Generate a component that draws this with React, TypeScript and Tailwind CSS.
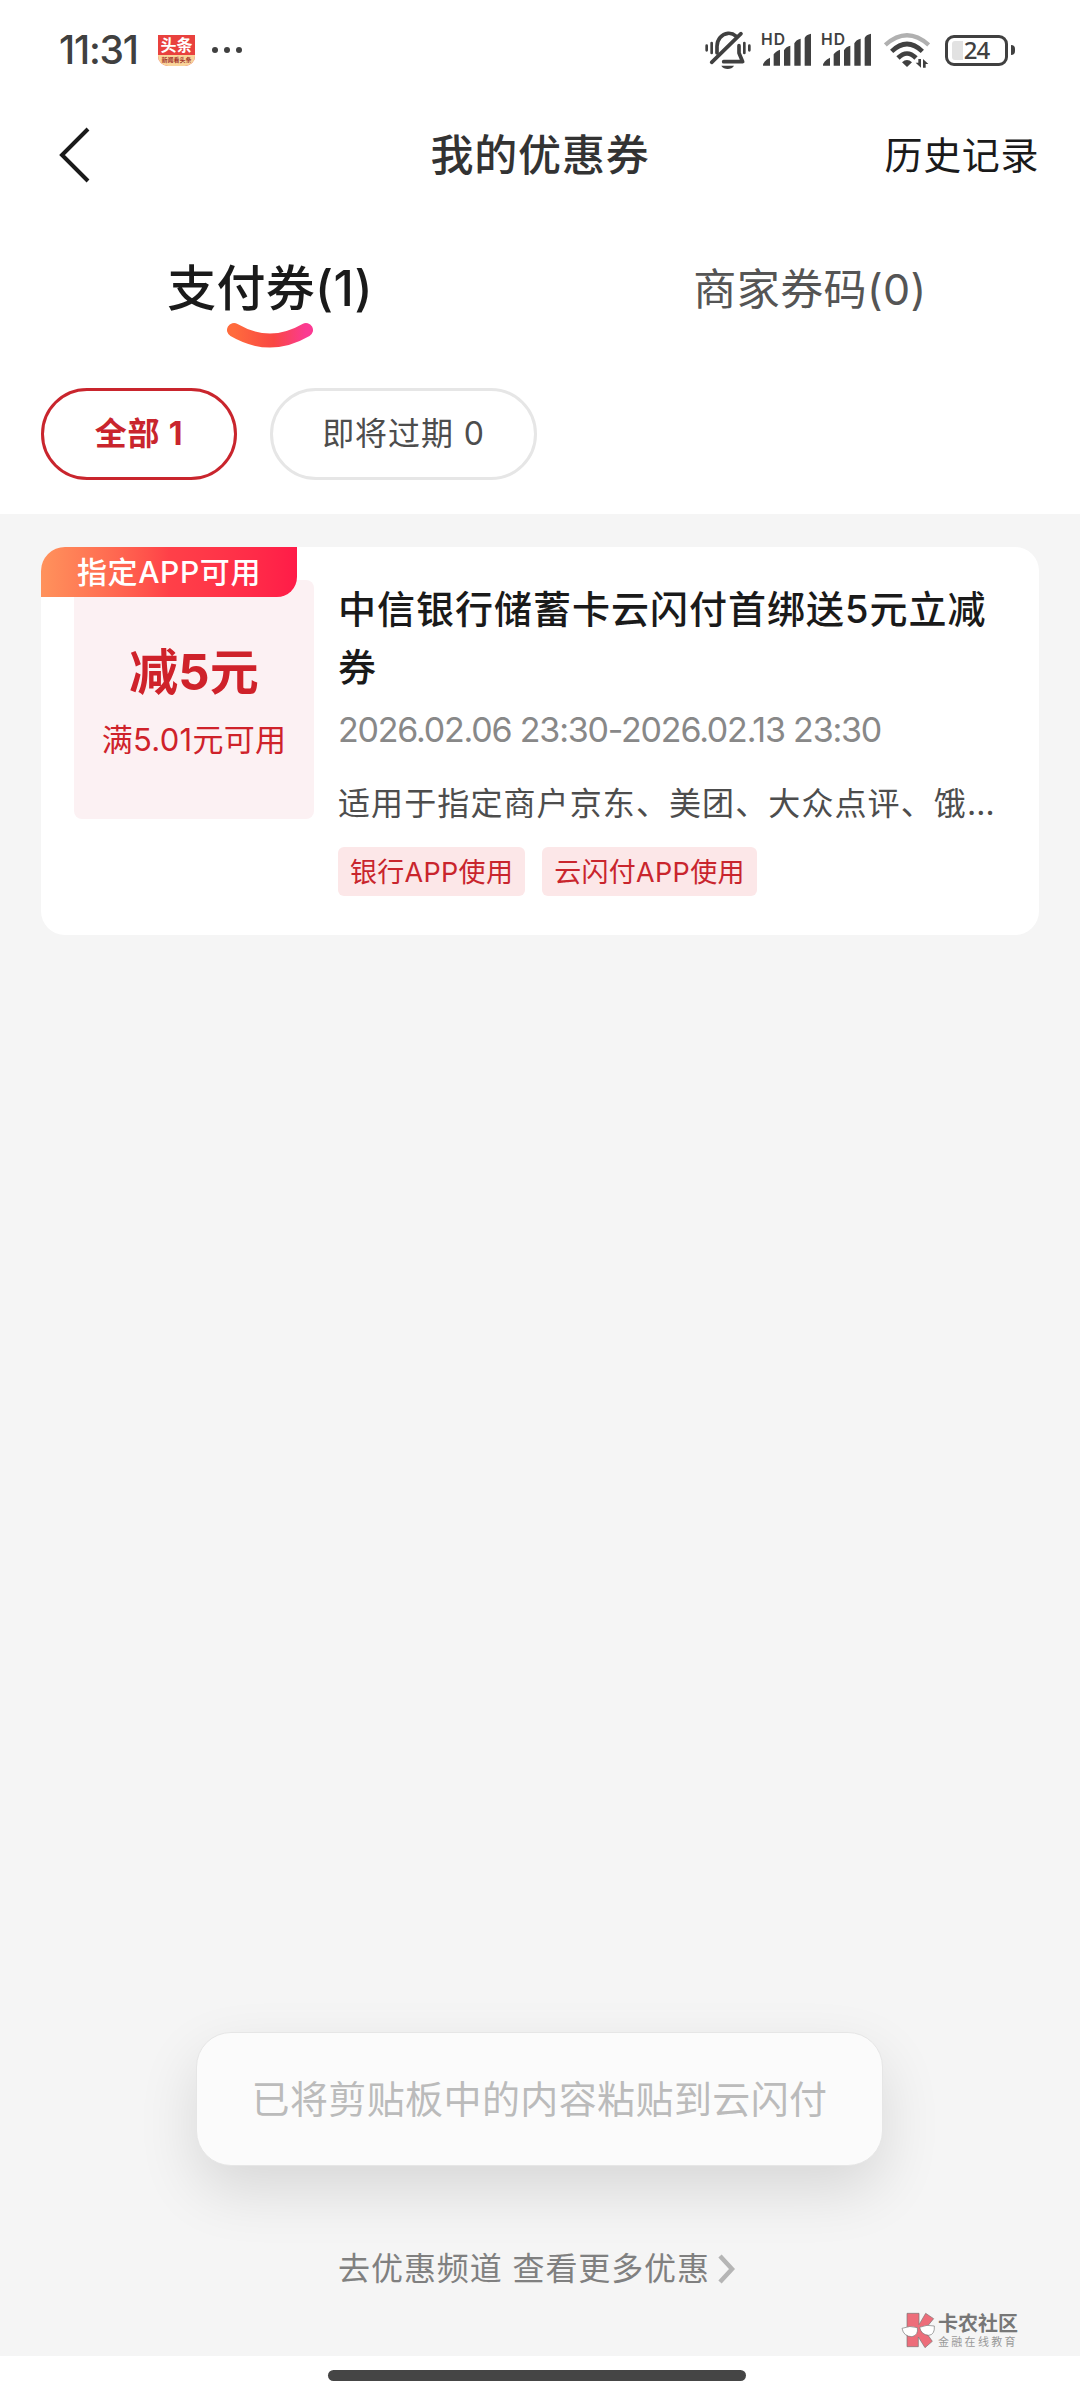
import React from 'react';

const tabs = [
  { id: 'pay', label: '支付券', count: 1 },
  { id: 'merchant', label: '商家券码', count: 0 },
];

const coupon = {
  badge: '指定APP可用',
  amount: '减5元',
  condition: '满5.01元可用',
  title: '中信银行储蓄卡云闪付首绑送5元立减券',
  period: '2026.02.06 23:30-2026.02.13 23:30',
  desc: '适用于指定商户京东、美团、大众点评、饿…',
  tags: ['银行APP使用', '云闪付APP使用'],
};

function MutedBellIcon() {
  return (
    <svg width="46" height="39" viewBox="0 0 138 117" fill="none" stroke="#404040" strokeWidth="11" strokeLinecap="round">
      <path d="M5 44v14M20 36v30M118 36v30M133 44v14" strokeWidth="8" />
      <path d="M36 66V46c0-21 14-37 33-39c10-1 18 3 25 9" />
      <path d="M102 44v22l11 26H56" strokeLinejoin="round" />
      <path d="M108 8L20 94" />
      <path d="M49 104h38c-7 13-31 13-38 0z" fill="#404040" stroke="none" />
    </svg>
  );
}

function SignalIcon() {
  return (
    <svg className="overflow-visible" width="51" height="34" viewBox="0 0 153 102" fill="#404040">
      <text x="0" y="37" fontFamily="Inter, sans-serif" fontSize="47" fontWeight="600" textLength="72">HD</text>
      <path d="M6 98q0-14 21-24v24zM38 98V64q4-8 19-14v48zM69 98V52q4-10 19-14v60zM100 98V31q4-10 19-14v81zM131 98V15q4-10 19-13v96z" />
    </svg>
  );
}

function WifiIcon() {
  return (
    <svg width="46" height="35" viewBox="0 0 138 105" fill="none" strokeWidth="13">
      <path d="M4 36Q69-22 134 36" stroke="#b0b0b0" />
      <path d="M23 55Q69 11 115 55" stroke="#404040" strokeWidth="14" />
      <path d="M42 75Q69 48 96 75" stroke="#404040" strokeWidth="14" />
      <path d="M54 88q15-14 30 0L69 102z" fill="#404040" />
      <path d="M111 78v26l-16-15h8V78zM117 104V78l16 15h-8v11z" fill="#404040" />
    </svg>
  );
}

function BatteryIcon() {
  return (
    <div className="flex items-center gap-[3px]">
      <div className="relative flex h-[31px] w-[63px] items-center justify-center rounded-[9px] border-[3px] border-[#404040]">
        <div className="absolute left-1 top-[3px] h-[19px] w-[11px] rounded-l-[3px] bg-[#e2e2e2]" />
        <span className="relative font-['Noto_Sans'] text-[24px] leading-none font-medium tracking-[-1px]">24</span>
      </div>
      <div className="h-[10px] w-1 rounded-r-full bg-[#404040]" />
    </div>
  );
}

function StatusBar() {
  return (
    <div className="flex h-[100px] items-center pl-[59px] pr-[65px] text-[#404040]">
      <span className="w-[80px] pb-px text-[39px] leading-none font-medium tracking-[-1.2px]">11:31</span>
      <div className="ml-[19px] flex h-[31px] w-[37px] flex-col overflow-hidden rounded-b-[10px] bg-[#e9413e]">
        <span className="text-center text-[16px] leading-[20px] font-bold text-white">头条</span>
        <span className="h-[11px] bg-[#f9d49a] text-center text-[6px] leading-[9px] font-bold whitespace-nowrap text-[#a3352a]">新闻看头条</span>
      </div>
      <div className="ml-[17px] flex gap-[6px]">
        <i className="size-[6px] rounded-full bg-[#404040]" />
        <i className="size-[6px] rounded-full bg-[#404040]" />
        <i className="size-[6px] rounded-full bg-[#404040]" />
      </div>
      <div className="ml-auto flex items-center">
        <MutedBellIcon />
        <div className="ml-[10px] flex gap-[9px]">
          <SignalIcon />
          <SignalIcon />
        </div>
        <div className="ml-[12px] mr-[15px]">
          <WifiIcon />
        </div>
        <BatteryIcon />
      </div>
    </div>
  );
}

function Header() {
  return (
    <div className="grid h-[110px] grid-cols-3 items-center pl-[59px] pr-[41px]">
      <svg width="32" height="56" viewBox="0 0 32 56" fill="none" stroke="#1a1a1a" strokeWidth="4">
        <path d="M29 2L3 28L29 54" />
      </svg>
      <h1 className="-ml-[18px] text-center text-[43px] leading-none font-medium tracking-[0.8px] whitespace-nowrap text-[#333]">我的优惠券</h1>
      <span className="text-right text-[38px] leading-none tracking-[0.6px] text-[#1a1a1a]">历史记录</span>
    </div>
  );
}

function Tabs() {
  return (
    <div className="grid h-[150px] grid-cols-2 pt-[49px]">
      <div className="flex flex-col items-center">
        <span className="text-[49px] leading-[60px] font-medium tracking-[0.3px] text-[#1a1a1a]">{tabs[0].label}({tabs[0].count})</span>
        <svg className="mt-[3px]" width="88" height="28" viewBox="0 0 88 28" fill="none">
          <defs>
            <linearGradient id="smile" x1="0" y1="0" x2="1" y2="0">
              <stop offset="0" stopColor="#ff6b3d" />
              <stop offset="0.55" stopColor="#f94743" />
              <stop offset="1" stopColor="#fb3a92" />
            </linearGradient>
          </defs>
          <path d="M8 8Q44 29 80 8" stroke="url(#smile)" strokeWidth="14" strokeLinecap="round" />
        </svg>
      </div>
      <span className="text-center text-[43px] leading-[60px] tracking-[0.4px] text-[#555]">{tabs[1].label}({tabs[1].count})</span>
    </div>
  );
}

function Filters() {
  return (
    <div className="flex h-[154px] gap-[33px] px-[41px] pt-[28px]">
      <button className="h-[92px] w-[196px] rounded-full border-[3px] border-[#c9252d] text-[32px] font-bold tracking-[0.8px] text-[#c9252d]">全部 1</button>
      <button className="h-[92px] w-[267px] rounded-full border-[3px] border-[#e6e6e6] text-[32px] tracking-[0.9px] text-[#4d4d4d]">即将过期 0</button>
    </div>
  );
}

function CouponCard() {
  return (
    <div className="relative flex h-[388px] rounded-[24px] bg-white pl-[33px] pt-[33px]">
      <div className="flex h-[239px] w-[240px] shrink-0 flex-col items-center rounded-[8px] bg-[#fcf1f3] pt-[63px] text-[#cf222a]">
        <span className="text-[49px] leading-[60px] font-bold">{coupon.amount}</span>
        <span className="mt-[9px] text-[31px] leading-[56px] tracking-[0.3px] whitespace-nowrap">{coupon.condition}</span>
      </div>
      <div className="ml-[24px] w-[674px]">
        <h2 className="text-[38px] leading-[58px] font-medium tracking-[1px] text-[#1a1a1a]">{coupon.title}</h2>
        <p className="mt-[11px] text-[34px] leading-[46px] tracking-[-1.2px] whitespace-nowrap text-[#888]">{coupon.period}</p>
        <p className="mt-[27px] text-[32px] leading-[48px] tracking-[1.1px] whitespace-nowrap text-[#4d4d4d]">{coupon.desc}</p>
        <div className="mt-[19px] flex gap-[17px]">
          {coupon.tags.map((tag) => (
            <span key={tag} className="flex h-[49px] items-center rounded-[6px] bg-[#fce7e8] px-[12px] pt-px text-[27px] leading-none tracking-[0.3px] whitespace-nowrap text-[#c9252d]">
              {tag}
            </span>
          ))}
        </div>
      </div>
      {/* corner ribbon over the amount box */}
      <div className="absolute left-0 top-0 flex h-[50px] w-[256px] items-center justify-center rounded-tl-[24px] rounded-br-[20px] bg-linear-to-r from-[#ff925c] via-[#ff4048] via-50% to-[#ff1b48] pb-px text-[30px] leading-none font-medium tracking-[0.6px] text-white">
        {coupon.badge}
      </div>
    </div>
  );
}

function Toast() {
  return (
    <div className="-ml-px flex h-[134px] w-[687px] items-center justify-center rounded-[35px] border border-[#e6e6e6] bg-[#fbfbfb] pt-px text-[38px] tracking-[0.4px] whitespace-nowrap text-[#bbb] shadow-[0_24px_60px_rgba(0,0,0,0.12)]">
      已将剪贴板中的内容粘贴到云闪付
    </div>
  );
}

function Watermark() {
  return (
    <div className="flex items-center gap-[2px]">
      <svg width="35" height="37" viewBox="0 0 105 111" stroke="#777" strokeWidth="2">
        <path d="M18 4h36v34L74 4l24 16-28 34 24 34-22 19-20-32v29H18z" fill="#ed6d7a" />
        <path d="M3 49q24-10 46-2q4 22-16 27Q8 74 3 49zM56 46q22-10 44-4q2 26-17 28Q60 68 56 46z" fill="#fff" />
      </svg>
      <div>
        <p className="text-[20px] leading-[23px] font-bold text-[#777]">卡农社区</p>
        <p className="text-[11px] leading-[13px] tracking-[2.3px] text-[#999]">金融在线教育</p>
      </div>
    </div>
  );
}

export default function App() {
  return (
    <div className="flex h-[2400px] w-[1080px] flex-col overflow-hidden bg-white font-[Inter,'Noto_Sans_CJK_SC',sans-serif]">
      <StatusBar />
      <Header />
      <Tabs />
      <Filters />
      <main className="flex flex-1 flex-col bg-[#f5f5f5] px-[41px] pt-[33px]">
        <CouponCard />
        <div className="mt-auto flex justify-center">
          <Toast />
        </div>
        <div className="mt-[79px] flex h-[48px] items-center justify-center pr-[7px]">
          <span className="text-[32px] tracking-[0.9px] text-[#808080]">去优惠频道 查看更多优惠</span>
          <svg className="ml-[7px]" width="18" height="30" viewBox="0 0 18 30" fill="none" stroke="#b5b5b5" strokeWidth="4.5">
            <path d="M3 2L15 15L3 28" />
          </svg>
        </div>
        <div className="mt-[19px] mb-[7px] flex justify-end pr-[21px]">
          <Watermark />
        </div>
      </main>
      <div className="flex h-[44px] justify-center pt-[14px] pr-[6px]">
        <div className="h-[11px] w-[418px] rounded-full bg-[#454545]" />
      </div>
    </div>
  );
}
